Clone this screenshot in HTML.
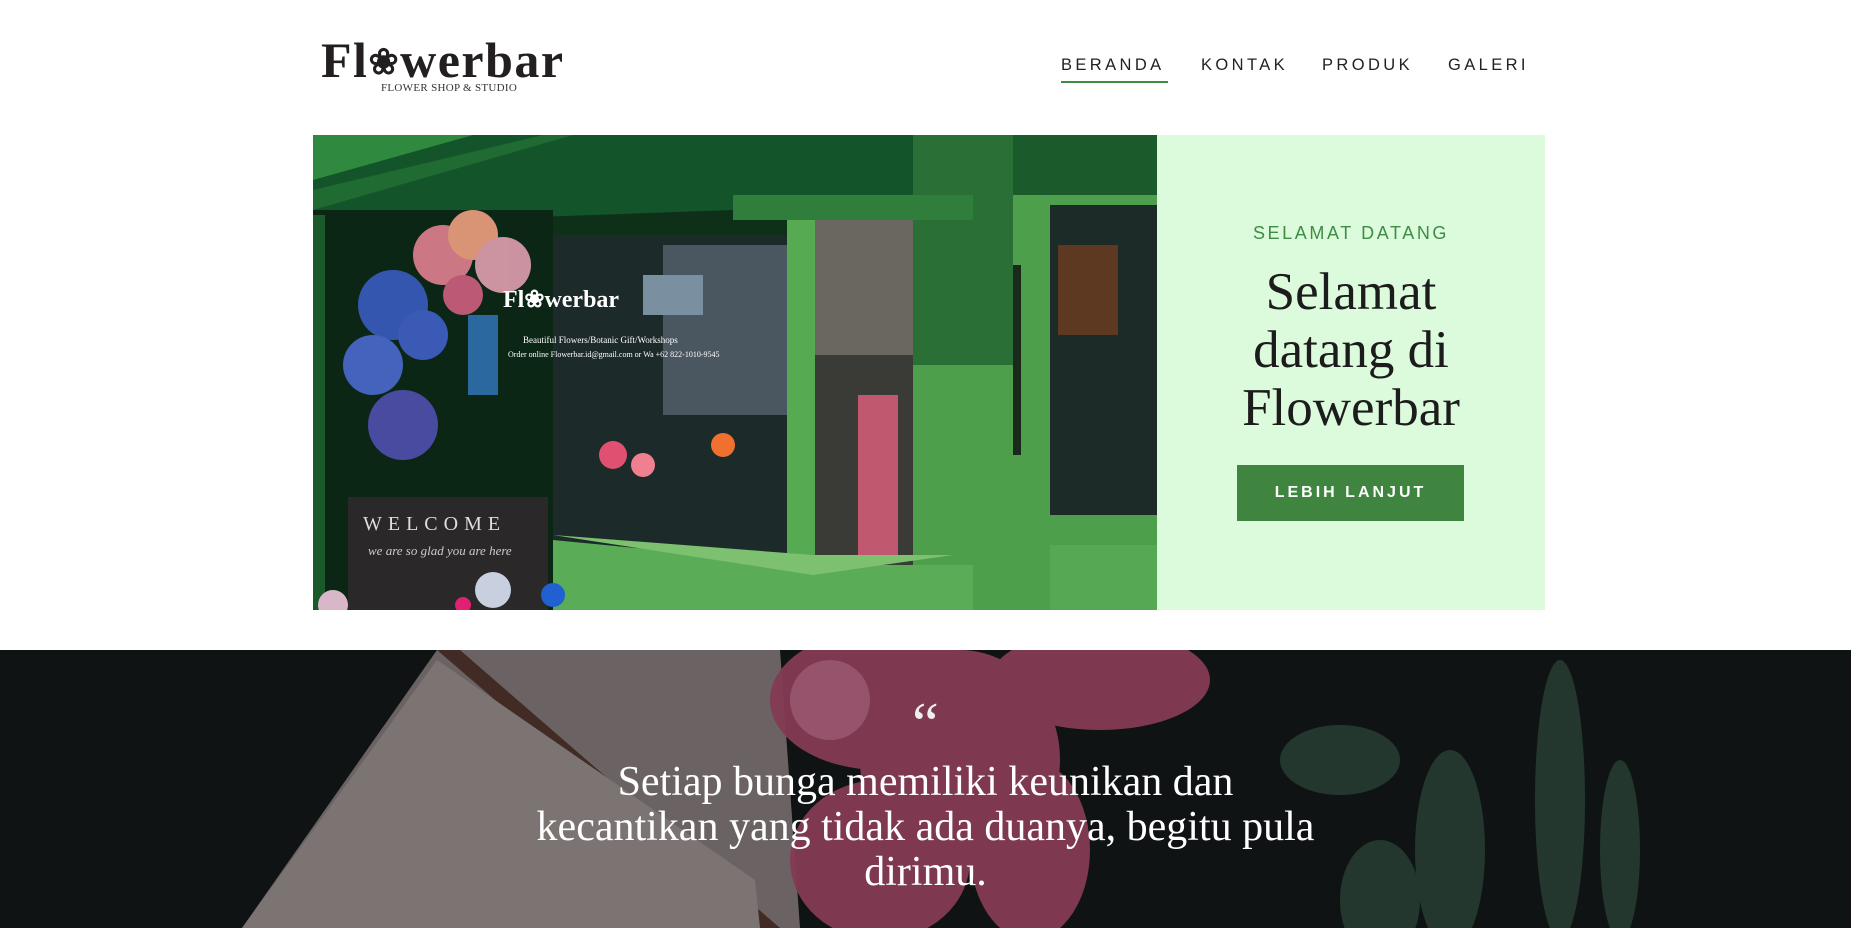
<!DOCTYPE html>
<html><head><meta charset="utf-8"><style>
*{margin:0;padding:0;box-sizing:border-box}
body{width:1851px;height:928px;overflow:hidden;background:#fff;font-family:"Liberation Sans",sans-serif;position:relative}
.nav a{position:absolute;top:56px;font-size:16.5px;letter-spacing:3.4px;color:#222;text-decoration:none;white-space:nowrap}
.logo{position:absolute;left:321px;top:30px;font-family:"Liberation Serif",serif;font-weight:bold;font-size:50px;color:#231f20;letter-spacing:1.5px;line-height:60px}
.sub{position:absolute;left:381px;top:82px;font-family:"Liberation Serif",serif;font-size:11px;color:#333;letter-spacing:.3px}
.panel{position:absolute;left:1157px;top:135px;width:388px;height:475px;background:#dcfadc;text-align:center}
.kicker{position:absolute;top:88px;width:100%;font-size:18px;letter-spacing:2.6px;color:#3f8c45}
.h{position:absolute;top:128px;width:100%;font-family:"Liberation Serif",serif;font-size:53px;line-height:58px;color:#1c1c1c}
.btn{position:absolute;left:80px;top:330px;width:227px;height:56px;background:#3f843f;color:#fff;font-weight:bold;font-size:16px;letter-spacing:3px;line-height:56px}
.dark{position:absolute;left:0;top:650px;width:1851px;height:278px;overflow:hidden;background:#141a1a}
.q{position:absolute;left:0;top:110px;width:1851px;text-align:center;font-family:"Liberation Serif",serif;font-size:42px;line-height:45px;color:#fff}
</style></head><body>
<div class="logo">Fl<span style="font-size:36px;vertical-align:3px">&#x2740;</span>werbar</div>
<div class="sub">FLOWER SHOP &amp; STUDIO</div>
<div class="nav">
<a style="left:1061px">BERANDA</a><a style="left:1201px">KONTAK</a><a style="left:1322px">PRODUK</a><a style="left:1448px">GALERI</a>
</div>
<div style="position:absolute;left:1061px;top:81px;width:107px;height:2px;background:#3f8c45"></div>

<svg style="position:absolute;left:313px;top:135px" width="844" height="475" viewBox="0 0 844 475">
<rect width="844" height="475" fill="#0e2f18"/>
<polygon points="0,0 700,0 700,60 420,75 0,90" fill="#14542a"/>
<polygon points="0,0 160,0 0,45" fill="#2f8a40"/>
<polygon points="0,55 230,0 260,0 0,75" fill="#1f6b32"/>
<rect x="0" y="75" width="240" height="400" fill="#0c2616"/>
<rect x="0" y="80" width="12" height="395" fill="#1a5a2a"/>
<rect x="240" y="100" width="234" height="320" fill="#1d2a2a"/>
<rect x="350" y="110" width="124" height="170" fill="#4a5660"/>
<rect x="330" y="140" width="60" height="40" fill="#7a8fa0"/>
<rect x="500" y="80" width="100" height="350" fill="#3a3a36"/>
<rect x="500" y="80" width="100" height="140" fill="#6a6660"/>
<rect x="545" y="260" width="40" height="160" fill="#c05870"/>
<rect x="600" y="0" width="244" height="475" fill="#4e9f4c"/>
<rect x="600" y="0" width="100" height="230" fill="#2a7036"/>
<rect x="700" y="0" width="144" height="60" fill="#1b5a2a"/>
<rect x="737" y="70" width="107" height="310" fill="#1c2a28"/>
<rect x="745" y="110" width="60" height="90" fill="#7a4020" opacity=".7"/>
<rect x="700" y="130" width="8" height="190" fill="#1a2a1a"/>
<rect x="737" y="410" width="107" height="65" fill="#57a855"/>
<rect x="474" y="70" width="28" height="370" fill="#55aa52"/>
<rect x="420" y="60" width="240" height="25" fill="#2f7e3c"/>
<polygon points="240,405 500,430 660,430 660,475 240,475" fill="#5aad56"/>
<polygon points="240,400 500,420 640,420 500,440" fill="#7cc070"/>
<g opacity=".9">
<circle cx="80" cy="170" r="35" fill="#3a5cc0"/><circle cx="60" cy="230" r="30" fill="#4a6ad0"/>
<circle cx="90" cy="290" r="35" fill="#5050b0"/><circle cx="110" cy="200" r="25" fill="#4060c8"/>
<circle cx="130" cy="120" r="30" fill="#e08090"/><circle cx="160" cy="100" r="25" fill="#f0a080"/>
<circle cx="190" cy="130" r="28" fill="#e0a0b0"/><circle cx="150" cy="160" r="20" fill="#d06080"/>
<rect x="155" y="180" width="30" height="80" fill="#3070b0"/>
</g>
<text x="190" y="172" font-family="Liberation Serif" font-weight="bold" font-size="24" fill="#fff">Fl&#x2740;werbar</text>
<text x="210" y="208" font-family="Liberation Serif" font-size="9" fill="#fff">Beautiful Flowers/Botanic Gift/Workshops</text>
<text x="195" y="222" font-family="Liberation Serif" font-size="8" fill="#fff">Order online Flowerbar.id@gmail.com or Wa +62 822-1010-9545</text>
<circle cx="300" cy="320" r="14" fill="#e05070"/><circle cx="330" cy="330" r="12" fill="#f08090"/><circle cx="410" cy="310" r="12" fill="#f07030"/>
<rect x="35" y="362" width="200" height="113" fill="#2a2828"/>
<text x="50" y="395" font-family="Liberation Serif" font-size="20" letter-spacing="6" fill="#ddd">WELCOME</text>
<text x="55" y="420" font-family="Liberation Serif" font-style="italic" font-size="13" fill="#ccc">we are so glad you are here</text>
<circle cx="20" cy="470" r="15" fill="#d8b8c8"/><circle cx="180" cy="455" r="18" fill="#c8d0e0"/><circle cx="240" cy="460" r="12" fill="#2060d0"/><circle cx="150" cy="470" r="8" fill="#e02070"/>
</svg>

<div class="panel">
<div class="kicker">SELAMAT DATANG</div>
<div class="h">Selamat<br>datang di<br>Flowerbar</div>
<div class="btn">LEBIH LANJUT</div>
</div>

<div class="dark">
<svg width="1851" height="278" viewBox="0 650 1851 278" style="position:absolute;left:0;top:0">
<polygon points="437,650 780,650 800,928 242,928" fill="#8f8584"/>
<polygon points="437,650 460,650 780,928 760,928" fill="#5a3a32"/>
<polygon points="437,660 755,880 760,928 242,928" fill="#a59b9a"/>
<g fill="#b04e70" opacity=".95">
<ellipse cx="880" cy="700" rx="110" ry="70"/><ellipse cx="960" cy="760" rx="100" ry="110"/>
<ellipse cx="880" cy="860" rx="90" ry="80"/><ellipse cx="1100" cy="680" rx="110" ry="50"/>
<ellipse cx="1030" cy="850" rx="60" ry="90"/>
</g>
<ellipse cx="830" cy="700" rx="40" ry="40" fill="#c87090"/>
<g fill="#2f4a3e">
<ellipse cx="1340" cy="760" rx="60" ry="35"/><ellipse cx="1560" cy="800" rx="25" ry="140"/>
<ellipse cx="1450" cy="850" rx="35" ry="100"/><ellipse cx="1620" cy="850" rx="20" ry="90"/>
<ellipse cx="1380" cy="900" rx="40" ry="60"/>
</g>
<rect x="0" y="650" width="1851" height="278" fill="#000" opacity=".25"/>
</svg>
<div style="position:absolute;left:0;top:40px;width:1851px;text-align:center;font-family:'Liberation Serif',serif;font-size:60px;color:#eee">&ldquo;</div>
<div class="q">Setiap bunga memiliki keunikan dan<br>kecantikan yang tidak ada duanya, begitu pula<br>dirimu.</div>
</div>
</body></html>
